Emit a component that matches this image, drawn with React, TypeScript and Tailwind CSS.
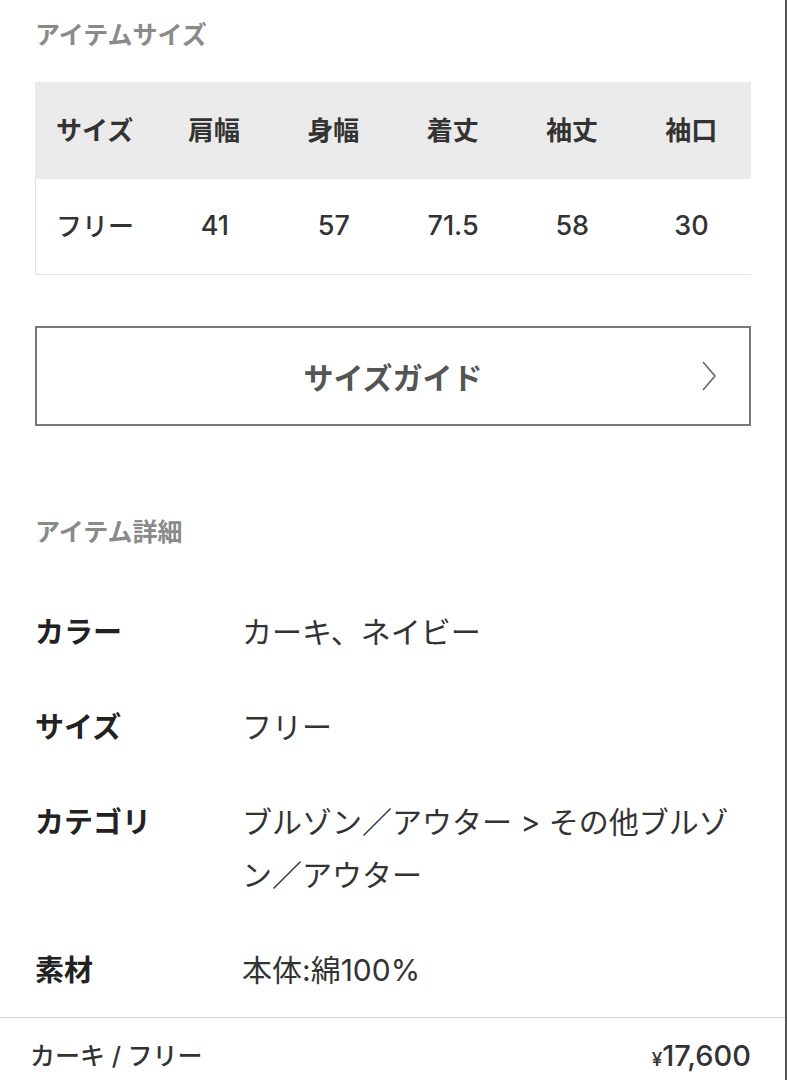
const FONT = {
  fontFamily: '"Inter", "Noto Sans CJK JP", sans-serif',
};

const SIZE_HEAD = ["サイズ", "肩幅", "身幅", "着丈", "袖丈", "袖口"];
const SIZE_ROW = ["フリー", "41", "57", "71.5", "58", "30"];

const DETAILS: { label: string; value: string }[] = [
  { label: "カラー", value: "カーキ、ネイビー" },
  { label: "サイズ", value: "フリー" },
  { label: "カテゴリ", value: "ブルゾン／アウター > その他ブルゾン／アウター" },
  { label: "素材", value: "本体:綿100%" },
];

function Chevron() {
  return (
    <svg width="16" height="32" viewBox="0 0 16 32" fill="none">
      <polyline
        points="2,2 14,16 2,30"
        stroke="#666"
        strokeWidth="1.6"
        strokeLinejoin="miter"
      />
    </svg>
  );
}

export default function App() {
  return (
    <div
      style={FONT}
      className="flex h-[1080px] w-[787px] flex-col overflow-hidden border-r-2 border-[#555] bg-white"
    >
      <div className="flex flex-col pl-[35px] pr-[34px]">
        {/* アイテムサイズ */}
        <h2 className="pt-[17px] text-[25px] font-bold leading-[36px] text-[#8a8a8a]">
          アイテムサイズ
        </h2>

        <div className="mt-[29px]">
          <div className="grid h-[97px] grid-cols-6 items-center bg-[#ebebeb]">
            {SIZE_HEAD.map((h) => (
              <div
                key={h}
                className="text-center text-[26px] font-semibold text-[#333]"
              >
                {h}
              </div>
            ))}
          </div>
          <div className="grid h-[96px] grid-cols-6 items-center border-b border-l border-[#e2e2e2]">
            {SIZE_ROW.map((v, i) => (
              <div
                key={i}
                className={`text-center font-medium text-[#333] ${i === 0 ? "-ml-px text-[26px]" : "text-[27px]"}`}
              >
                {v}
              </div>
            ))}
          </div>
        </div>

        <button
          type="button"
          className="relative mt-[51px] flex h-[100px] items-center justify-center border-2 border-[#777] bg-white"
        >
          <span className="pt-[4px] text-[30px] font-bold text-[#555]">サイズガイド</span>
          <span className="absolute right-[32px] top-1/2 -translate-y-1/2">
            <Chevron />
          </span>
        </button>

        {/* アイテム詳細 */}
        <h2 className="mt-[88px] text-[25px] font-bold leading-[36px] text-[#8a8a8a]">
          アイテム詳細
        </h2>

        <dl className="mt-[56px] flex flex-col gap-[42px]">
          {DETAILS.map((d) => (
            <div key={d.label} className="flex">
              <dt className="w-[207px] shrink-0 text-[29px] font-bold leading-[53px] text-[#222]">
                {d.label}
              </dt>
              <dd className="min-w-0 flex-1 text-[30px] leading-[53px] text-[#333]">
                {d.value}
              </dd>
            </div>
          ))}
        </dl>
      </div>

      {/* bottom bar */}
      <div className="mt-auto border-t border-[#cfcfcf]">
        <div className="flex h-[62px] items-start justify-between pl-[30px] pr-[34px] pt-[20px]">
          <span className="text-[25px] font-medium leading-[36px] text-[#333]">
            カーキ / フリー
          </span>
          <span className="text-[29px] font-medium leading-[36px] text-[#333]">
            <span className="text-[19px]">¥</span>17,600
          </span>
        </div>
      </div>
    </div>
  );
}
